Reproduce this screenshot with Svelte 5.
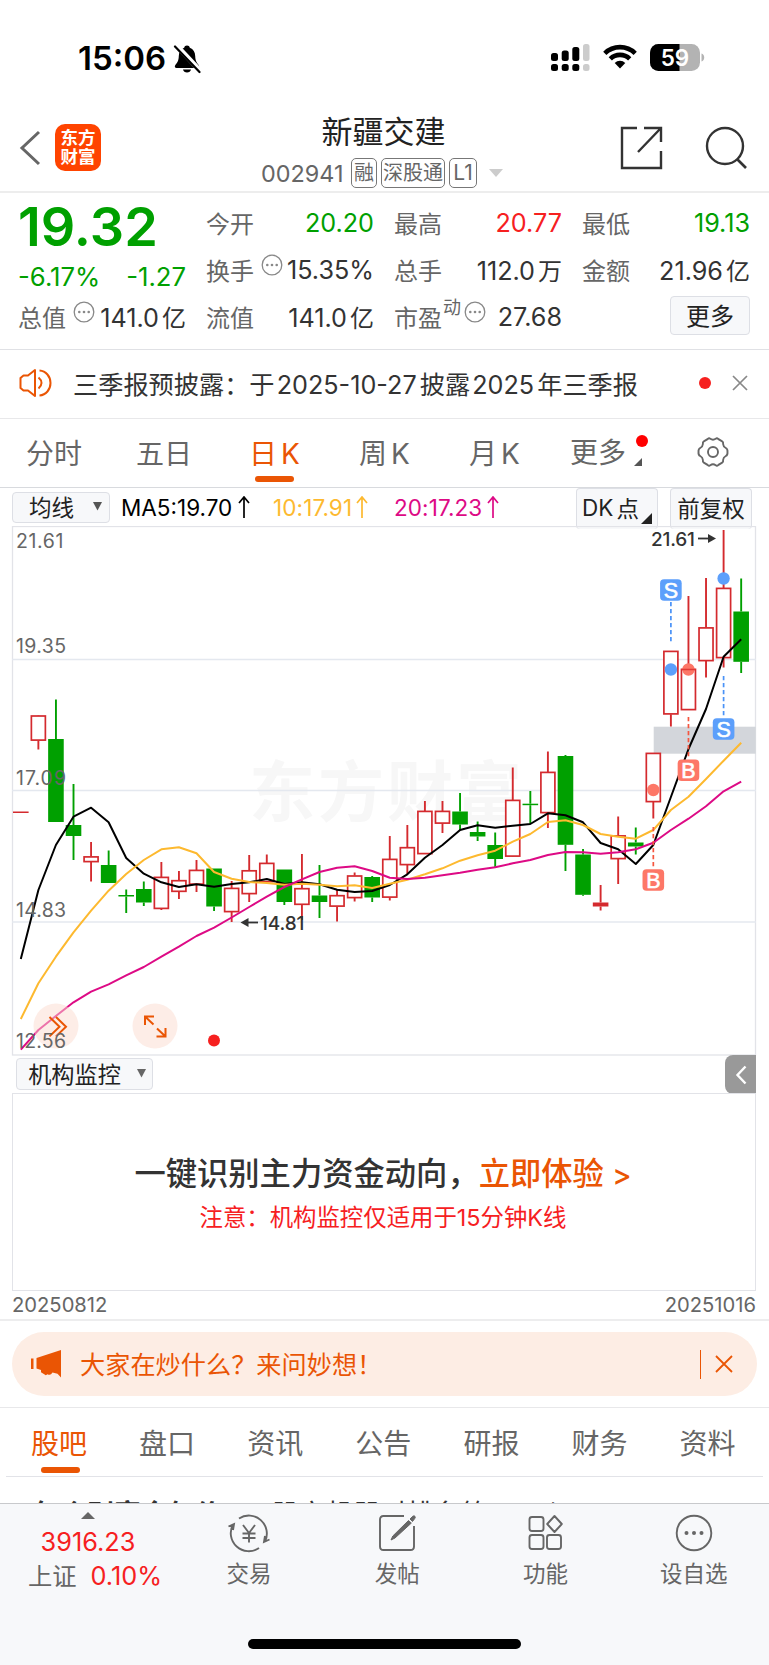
<script>
  const X0 = 20.8;
  const STEP = 17.57;
  const cx = (i) => X0 + STEP * i;

  // [kind, bodyTop, bodyBottom, high, low]; r = rising, g = falling, f = solid red
  const candles = [
    ['f', 811.5, 813, 811.5, 813],
    ['r', 715.6, 740.5, 716, 749.5],
    ['g', 739, 822, 699.5, 822],
    ['g', 825, 836, 784, 860],
    ['r', 856.5, 862, 842, 881.5],
    ['g', 865, 883, 850.5, 883],
    ['g', 895, 896.5, 889.5, 913],
    ['g', 889, 902.5, 881.5, 906],
    ['r', 877, 908.8, 862, 910],
    ['r', 880.3, 891.7, 871, 899],
    ['r', 870, 884.5, 860, 892],
    ['g', 868.5, 906.5, 868.5, 911],
    ['r', 888, 912, 881, 922],
    ['r', 870.4, 894, 855, 902],
    ['r', 863, 882, 854.5, 882],
    ['g', 869.5, 902, 869.5, 905],
    ['r', 888.3, 904.7, 854, 920],
    ['g', 895.5, 902, 865, 918],
    ['r', 895.3, 906.5, 889.5, 921.5],
    ['r', 875.6, 898, 872.5, 901.5],
    ['g', 877, 897.5, 876, 902],
    ['r', 859, 897.5, 836, 900.5],
    ['r', 847.3, 865, 825, 874],
    ['r', 811, 854, 801, 854],
    ['r', 811, 823.5, 801, 833],
    ['g', 811.5, 824.5, 793, 830],
    ['g', 832, 836.5, 821.5, 841],
    ['g', 845, 859, 832.5, 867],
    ['r', 800, 856.5, 767.5, 856],
    ['g', 803.7, 805.2, 791, 824],
    ['r', 772, 813, 751.5, 828],
    ['g', 756, 844.8, 755, 871],
    ['g', 854.5, 894.8, 849, 895.8],
    ['f', 902.5, 906.5, 885, 910.5],
    ['r', 835.5, 859, 816.5, 884],
    ['g', 842.5, 846.5, 827.5, 854.5],
    ['r', 753, 802, 753, 818.5],
    ['r', 651, 714.3, 651, 726.5],
    ['r', 669, 710, 596, 710],
    ['r', 627.5, 661, 578, 677.5],
    ['r', 588, 658, 530, 667.5],
    ['g', 611.5, 661.8, 578.5, 673]
  ];

  const ma5 = [959, 890, 845, 816.7, 807.7, 822.3, 858, 873.7, 882.3, 887, 884.3, 886.7, 884, 882.3, 879, 884, 882.3, 884.3, 889.7, 892, 891, 885, 874.3, 857.7, 845, 830, 825.3, 827.7, 825.7, 824, 813.3, 815.3, 822.3, 843, 849.3, 864, 845, 797, 749, 709, 656.7, 639.3];
  const ma10 = [1019, 983.3, 956.7, 932.3, 910.7, 890.7, 874, 860, 849.3, 847.3, 853.3, 872, 878.7, 882, 883, 884.7, 883.7, 884.7, 886.3, 885.3, 888, 883.7, 879.7, 874.3, 868.3, 860.7, 855.3, 850.7, 841.7, 834, 822, 820.3, 825, 834, 836.7, 838.7, 830, 810, 796.7, 779, 760.7, 742.7];
  const ma20 = [1049.7, 1030, 1016, 1002.3, 991.7, 984.3, 975.3, 967, 956.7, 946.7, 936, 927.7, 917.5, 907, 896.7, 887, 879.3, 872, 867.7, 866.3, 871, 877.7, 879, 877.7, 875.3, 872.7, 869.7, 867.3, 863.3, 860, 855, 852, 852.3, 853.7, 852.3, 849.3, 842.7, 830, 818.7, 806.3, 791.3, 781.7];
  const line = (ys) => ys.map((y, i) => `${cx(i).toFixed(1)},${y}`).join(' ');

  const grid = [659.5, 790.5, 922];
  const scale = [['21.61', 548], ['19.35', 653], ['17.09', 784.5], ['14.83', 916.5], ['12.56', 1048]];

  const marks = [
    { t: 'S', i: 37, y: 590, d: [602, 643], dot: 669.5 },
    { t: 'S', i: 40, y: 729, d: [676, 717], dot: 578.5 },
    { t: 'B', i: 38, y: 770.3, d: [717, 759], dot: 669.5 },
    { t: 'B', i: 36, y: 880, d: [827, 869], dot: 790 }
  ];

  const tabs = ['股吧', '盘口', '资讯', '公告', '研报', '财务', '资料'];
</script>

{#snippet more()}
  <svg class="more" width="22" height="22" viewBox="0 0 22 22"><circle cx="11" cy="11" r="9.8" fill="none" stroke="#888" stroke-width="1.3" /><circle cx="6.3" cy="11" r="1.3" fill="#888" /><circle cx="11" cy="11" r="1.3" fill="#888" /><circle cx="15.7" cy="11" r="1.3" fill="#888" /></svg>
{/snippet}

<main>
  <div class="status">
    <b class="clock">15:06</b>
    <svg class="bell" width="28" height="30" viewBox="0 0 28 30">
      <path d="M14 1.5c1.5 0 2.5.8 2.8 2.2 3.6 1.2 5.3 4.400 5.400 8.300.1 5.500 2.300 7.500 3.600 9.300.8 1.200.3 2.700-1.300 2.700H3.500c-1.600 0-2.100-1.500-1.300-2.700 1.300-1.800 3.500-3.800 3.600-9.300.1-3.900 1.800-7.100 5.400-8.300C11.500 2.300 12.500 1.500 14 1.500z" />
      <path d="M10 25.500h8c-.4 1.900-2 3-4 3s-3.600-1.100-4-3z" />
      <path d="M3.500 1.500 27.500 27" stroke="#fff" stroke-width="5" />
      <path d="M2 2.500 26.500 28" stroke="#000" stroke-width="2.200" stroke-linecap="round" />
    </svg>
    <svg class="signal" width="39" height="28" viewBox="0 0 39 28">
      <g><rect x="0" y="9" width="7" height="8" rx="2.500" /><rect x="10.700" y="6.500" width="7" height="10.500" rx="2.500" /><rect x="21.300" y="3" width="7" height="14" rx="2.500" /><rect x="0" y="20" width="7" height="7" rx="2.500" /><rect x="10.700" y="20" width="7" height="7" rx="2.500" /><rect x="21.300" y="20" width="7" height="7" rx="2.500" /></g>
      <g fill="#ccc"><rect x="32" y="0" width="6.500" height="17" rx="2.500" /><rect x="32" y="20" width="6.500" height="7" rx="2.500" /></g>
    </svg>
    <svg class="wifi" width="34" height="25" viewBox="0 0 34 25">
      <g fill="none" stroke="#000" stroke-width="4.600"><path d="M1.800 9.300a21.800 21.800 0 0 1 30.400 0" /><path d="M7.300 14.900a13.800 13.800 0 0 1 19.400 0" /></g>
      <path d="M17 24.500l-5.300-5.600a7.600 7.600 0 0 1 10.600 0z" />
    </svg>
    <svg class="battery" width="55" height="28" viewBox="0 0 55 28">
      <defs><clipPath id="cell"><rect width="50" height="27" rx="8.500" /></clipPath></defs>
      <g clip-path="url(#cell)"><rect width="50" height="27" fill="#b3b3b3" /><rect width="29.500" height="27" /></g>
      <path d="M51.500 9.500c1.700.4 2.700 2 2.700 4s-1 3.600-2.700 4z" fill="#b3b3b3" />
      <text x="25" y="21.600" text-anchor="middle" font-size="22.500" font-weight="600" fill="#fff">59</text>
    </svg>
  </div>

  <header>
    <svg class="back" width="22" height="36" viewBox="0 0 22 36"><path d="M20 2 3 18l17 16" fill="none" stroke="#666" stroke-width="3" /></svg>
    <div class="logo"><span>东方</span><span>财富</span></div>
    <div class="title">
      <h1>新疆交建</h1>
      <div class="code"><span class="num">002941</span><i>融</i><i class="wide">深股通</i><i class="lv">L1</i><svg width="14" height="8" viewBox="0 0 14 8"><path d="M0 0h14L7 8z" fill="#ccc" /></svg></div>
    </div>
    <svg class="share" width="44" height="44" viewBox="0 0 44 44"><path d="M17 2H2v40h39V25M24 2h17v14M41 2 18 26" fill="none" stroke="#333" stroke-width="2.400" /></svg>
    <svg class="search" width="44" height="44" viewBox="0 0 44 44"><circle cx="20" cy="20" r="18" fill="none" stroke="#333" stroke-width="2.400" /><path d="m32 33 9 9" stroke="#333" stroke-width="2.600" /></svg>
  </header>

  <section class="quote">
    <div class="col first">
      <strong>19.32</strong>
      <div class="row change green"><span>-6.17%</span><span>-1.27</span></div>
      <div class="row cap"><label>总值</label>{@render more()}<em>141.0<u>亿</u></em></div>
    </div>
    <div class="col">
      <div class="row"><label>今开</label><em class="green">20.20</em></div>
      <div class="row"><label>换手</label>{@render more()}<em>15.35%</em></div>
      <div class="row"><label>流值</label><em>141.0<u>亿</u></em></div>
    </div>
    <div class="col">
      <div class="row"><label>最高</label><em class="red">20.77</em></div>
      <div class="row"><label>总手</label><em>112.0<u>万</u></em></div>
      <div class="row pe"><label>市盈</label><sup>动</sup>{@render more()}<em>27.68</em></div>
    </div>
    <div class="col">
      <div class="row"><label>最低</label><em class="green">19.13</em></div>
      <div class="row"><label>金额</label><em>21.96<u>亿</u></em></div>
      <div class="row end"><button>更多</button></div>
    </div>
  </section>

  <section class="notice">
    <svg width="34" height="30" viewBox="0 0 34 30"><g fill="none" stroke="#ea5504" stroke-width="2"><path d="M16 2v26l-7-5.500H4.500L1.500 20V10l3-2.500H9z" stroke-linejoin="round" /><path d="M19.500 9.500q3 2.500 3 5.500t-3 5.500M20.500 2.500C27 3 31.500 8.500 31.500 15S27 27 20.500 27.500" /></g></svg>
    <p>三季报预披露：于<u>2025-10-27</u>披露<u>2025</u>年三季报</p>
    <span class="dot"></span>
    <svg class="close" width="16" height="16" viewBox="0 0 16 16"><path d="m1 1 14 14M15 1 1 15" stroke="#888" stroke-width="1.700" /></svg>
  </section>

  <nav class="periods">
    <span>分时</span><span>五日</span><span class="on">日<u>K</u></span><span>周<u>K</u></span><span>月<u>K</u></span>
    <span class="drop">更多<svg width="9" height="28" viewBox="0 0 9 28"><path d="M8 19v8H0z" fill="#555" /></svg></span>
    <svg class="gear" width="32" height="32" viewBox="0 0 32 32"><g fill="none" stroke="#666" stroke-width="1.900"><path d="M10.500 3.200Q12 1.500 13.300 2.800Q16 4.600 18.700 2.800Q20 1.500 21.500 3.200L25.200 5.300Q26.500 6 26.100 8Q26.300 10.800 28.800 12Q30.800 13 30.500 16Q30.800 19 28.800 20Q26.300 21.200 26.100 24Q26.500 26 25.200 26.700L21.500 28.800Q20 30.500 18.700 29.200Q16 27.400 13.300 29.200Q12 30.500 10.500 28.800L6.800 26.700Q5.500 26 5.900 24Q5.700 21.200 3.200 20Q1.200 19 1.500 16Q1.200 13 3.200 12Q5.700 10.800 5.900 8Q5.500 6 6.800 5.300Z" /><circle cx="16" cy="16" r="5" /></g></svg>
  </nav>

  <div class="tools">
    <button class="ma">均线<svg width="9" height="9" viewBox="0 0 9 9"><path d="M0 0h9L4.500 8.500z" fill="#666" /></svg></button>
    <span class="m5">MA5:19.70<svg width="12" height="22" viewBox="0 0 12 22"><path d="M6 22V1M1 7 6 1l5 6" /></svg></span>
    <span class="m10">10:17.91<svg width="12" height="22" viewBox="0 0 12 22"><path d="M6 22V1M1 7 6 1l5 6" /></svg></span>
    <span class="m20">20:17.23<svg width="12" height="22" viewBox="0 0 12 22"><path d="M6 22V1M1 7 6 1l5 6" /></svg></span>
    <button class="dk">DK<u>点</u><svg width="11" height="11" viewBox="0 0 11 11"><path d="M11 0v11H0z" fill="#222" /></svg></button>
    <button class="fq">前复权</button>
  </div>

  <svg class="chart" width="769" height="530" viewBox="0 526 769 530">
    <text x="249" y="815.500" font-size="66" font-weight="700" fill="#f7f7f7" textLength="273">东方财富</text>
    <rect x="12.500" y="526.500" width="743" height="528.500" fill="none" stroke="#e2e3e8" stroke-width="1.300" />
    {#each grid as y}<line x1="12" x2="756" y1={y} y2={y} stroke="#e4e8ef" stroke-width="1.400" />{/each}
    <rect x="653.700" y="726.700" width="102" height="27" fill="#d3d6db" />
    {#each candles as [k, a, b, h, l], i}
      {@const c = k === 'g' ? '#00a000' : '#d42a2e'}
      <line x1={cx(i)} x2={cx(i)} y1={h} y2={a} stroke={c} stroke-width="1.900" />
      <line x1={cx(i)} x2={cx(i)} y1={b} y2={l} stroke={c} stroke-width="1.900" />
      {#if k === 'r'}
        <rect x={cx(i) - 7} y={a + 0.400} width="14" height={b - a - 0.800} fill="#fff" stroke={c} stroke-width="1.700" />
      {:else}
        <rect x={cx(i) - 7.800} y={a} width="15.600" height={b - a} fill={c} />
      {/if}
    {/each}
    {#each marks as m}<circle cx={cx(m.i)} cy={m.dot} r="6.200" fill={m.t === 'S' ? '#5c9ffb' : '#fd7767'} />{/each}
    <line x1={cx(38) - 7} x2={cx(38) + 7} y1="669.500" y2="669.500" stroke="#e23b36" stroke-width="1.500" />
    <g fill="none" stroke-width="2" stroke-linejoin="round">
      <polyline points={line(ma5)} stroke="#000" />
      <polyline points={line(ma10)} stroke="#fdb92f" />
      <polyline points={line(ma20)} stroke="#dd0a85" />
    </g>
    {#each marks as m}
      {@const c = m.t === 'S' ? '#5c9ffb' : '#fd7767'}
      <line x1={cx(m.i)} x2={cx(m.i)} y1={m.d[0]} y2={m.d[1]} stroke={m.t === 'S' ? '#4a92f7' : '#f5563f'} stroke-width="1.700" stroke-dasharray="4.200 2.800" />
      <rect x={cx(m.i) - 10.800} y={m.y - 10.800} width="21.600" height="21.600" rx="4" fill={c} />
      <text x={cx(m.i)} y={m.y + 7.500} text-anchor="middle" font-family="Liberation Sans" font-size="21.500" fill="#fff" stroke="#fff" stroke-width=".6">{m.t}</text>
    {/each}
    <g fill="#333" stroke="#333" stroke-width="0">
      <text x="651" y="546" font-size="19" font-weight="500" textLength="44">21.61</text>
      <path d="M698 538.500h14" stroke-width="1.800" /><path d="m708 534 8 4.500-8 4.500z" />
      <text x="260" y="929.500" font-size="19" font-weight="500" textLength="44.500">14.81</text>
      <path d="M258 922.500h-14" stroke-width="1.800" /><path d="m248.500 918-8 4.500 8 4.500z" />
    </g>
    <circle cx="56" cy="1026" r="22.500" fill="#fcdccf" opacity=".5" />
    <circle cx="155" cy="1026" r="22.500" fill="#fcdccf" opacity=".5" />
    <g fill="none" stroke="#ea5504" stroke-width="2">
      <path d="m49.500 1017 10 9.700-10 9.700M56 1017l10 9.700-10 9.700" />
      <path d="M145 1025v-8.500h9M145 1016.500l8.500 8M156.500 1036.500h9V1028M165.500 1036.500l-8.500-8" />
    </g>
    <circle cx="214" cy="1040.500" r="6" fill="#f6201f" />
    {#each scale as [t, y]}<text x="16" {y} font-size="19.500" fill="#666" textLength={t[0] === '2' ? 47.500 : 50}>{t}</text>{/each}
  </svg>

  <div class="monitor">
    <button>机构监控<svg width="9" height="9" viewBox="0 0 9 9"><path d="M0 0h9L4.500 8.500z" fill="#666" /></svg></button>
    <span class="fold"><svg width="12" height="20" viewBox="0 0 12 20"><path d="M10.500 1.500 2.500 10l8 8.500" fill="none" stroke="#fff" stroke-width="2.400" /></svg></span>
  </div>
  <div class="promo">
    <p class="big">一键识别主力资金动向，<span>立即体验 <b>&gt;</b></span></p>
    <p class="note">注意：机构监控仅适用于15分钟K线</p>
  </div>
  <div class="dates"><span>20250812</span><span>20251016</span></div>

  <div class="askwrap">
    <div class="ask">
      <svg width="31" height="28" viewBox="0 0 31 28"><g fill="#ea5504"><path d="M0 8.500h2.500v10.500H0zM5.500 8 30 0v27.500l-3.500-3.700-5-1.300q-2 3.500-5 1.700l-1.700 1L10 22.200V20l-4.500-1.500z" /></g></svg>
      <p>大家在炒什么？来问妙想！</p>
      <span class="bar"></span>
      <svg width="18" height="18" viewBox="0 0 18 18"><path d="m1 1 16 16M17 1 1 17" stroke="#ea5504" stroke-width="1.800" /></svg>
    </div>
  </div>

  <nav class="tabs">{#each tabs as t, i}<span class:on={i === 0}>{t}</span>{/each}</nav>
  <div class="peek"><b>每个别富今气价</b><span>股市机器时排名第</span><span class="up">个</span><em>说说</em></div>

  <footer>
    <div class="index">
      <svg width="14" height="7" viewBox="0 0 14 7"><path d="M7 0l7 7H0z" fill="#666" /></svg>
      <span class="red">3916.23</span>
      <div>上证<span class="red">0.10%</span></div>
    </div>
    <div class="act">
      <svg width="44" height="40" viewBox="0 0 44 40"><g fill="none" stroke="#666" stroke-width="1.900"><path d="M12 5.500A18 18 0 0 1 38 28.500M38 28.500l-1-1.500M42.500 26.500l-5.500 2.500 1-6M32 35A18 18 0 0 1 6 11.500M1.500 13.500l5.500-2.500-1 6" /><path d="m16 12 6 8 6-8M22 20v9.500M15.500 20.500h13M15.500 25h13" /></g></svg>交易
    </div>
    <div class="act">
      <svg width="44" height="40" viewBox="0 0 44 40"><g fill="none" stroke="#666" stroke-width="1.900"><path d="M29 3H8.500Q5 3 5 6.500v27Q5 37 8.500 37h27q3.500 0 3.500-3.500V13" /></g><path d="m33.500 7.500 2.800 2.600L20 25l-4 2 1.800-4zM35 6l2.800-2.800q1.500-.8 2.200.2t-.3 2.200L37.500 8.500z" fill="#666" stroke="#666" stroke-width="1" /></svg>发帖
    </div>
    <div class="act">
      <svg width="44" height="40" viewBox="0 0 44 40"><g fill="none" stroke="#666" stroke-width="1.900"><rect x="6.500" y="4" width="14" height="14" rx="2.500" /><rect x="6.500" y="22" width="14" height="14" rx="2.500" /><rect x="24" y="22" width="14" height="14" rx="2.500" /><path d="m31.500 3 7.300 8-7.300 8-7.300-8z" stroke-linejoin="round" /></g></svg>功能
    </div>
    <div class="act">
      <svg width="44" height="40" viewBox="0 0 44 40"><circle cx="22" cy="20" r="17.300" fill="none" stroke="#666" stroke-width="1.900" /><g fill="#666"><circle cx="14.500" cy="20" r="2" /><circle cx="22" cy="20" r="2" /><circle cx="29.500" cy="20" r="2" /></g></svg>设自选
    </div>
    <div class="home"></div>
  </footer>
</main>

<style>
  :global(body) { margin: 0; background: #fff; }
  main { width: 769px; height: 1665px; overflow: hidden; display: flex; flex-direction: column; font-family: Inter, 'Noto Sans CJK SC', sans-serif; color: #333; white-space: nowrap; }
  main :global(*) { box-sizing: border-box; }
  svg { display: block; flex: none; }
  u { text-decoration: none; }
  p, h1 { margin: 0; font-weight: 400; }
  i, em { font-style: normal; }
  .green { color: #00a000; }
  .red { color: #f6201f; }
  button { font: inherit; color: #222; background: #f7f8fa; border: 1.5px solid #dddfe5; border-radius: 4px; padding: 0; display: flex; align-items: center; justify-content: center; }

  .status { height: 105px; flex: none; display: flex; align-items: flex-start; padding: 44px 0 0 78px; color: #000; }
  .clock { font-size: 33px; line-height: 28px; font-weight: 600; width: 95px; letter-spacing: 0; }
  .signal { margin-left: 350px; }
  .wifi { margin-left: 13px; }
  .battery { margin-left: 13px; }

  header { height: 88px; flex: none; border-bottom: 2px solid #ededed; display: grid; grid-template-columns: 55px 46px 521px 42px 44px; align-items: start; }
  .back { margin: 25px 0 0 19px; }
  .logo { margin-top: 19px; height: 47px; border-radius: 10px; background: #ff4400; color: #fff; font-size: 17.500px; font-weight: 700; line-height: 19px; display: flex; flex-direction: column; align-items: center; padding-top: 4px; }
  .title { padding: 10px 0 0 21px; text-align: center; }
  h1 { font-size: 31px; line-height: 34px; width: 523px; color: #222; }
  .code { display: flex; align-items: center; height: 30px; margin: 9px 0 0 139px; color: #666; font-size: 23.400px; }
  .num { width: 90px; text-align: left; }
  .code i { border: 1.3px solid #777; border-radius: 5px; height: 30px; line-height: 28px; width: 26px; font-size: 20px; margin-right: 4px; display: flex; justify-content: center; }
  .code i.wide { width: 64px; }
  .code i.lv { width: 28px; font-size: 21px; margin-right: 12px; }
  .share { margin: 21px 0 0 -2px; }
  .search { margin: 21px 0 0 41px; }

  .quote { height: 157px; flex: none; border-bottom: 1.5px solid #e0e1e5; display: grid; grid-template-columns: repeat(4, 168px); gap: 20px; padding: 6px 0 0 18px; font-size: 24px; }
  .row { height: 47px; display: flex; align-items: center; }
  .row label { color: #666; width: 48px; }
  .row em { margin-left: auto; font-size: 25.200px; }
  .row u { margin-left: 3px; font-size: 24px; }
  .row .more { margin: -9px 0 0 7px; }
  .first strong { display: block; font-size: 54px; line-height: 54px; margin-top: 1px; font-weight: 600; color: #00a000; }
  .first .change { height: 45px; justify-content: space-between; font-size: 25.700px; }
  .first .cap { height: 35px; }
  .pe sup { font-size: 18px; line-height: 18px; color: #666; margin: -17px 0 0 1px; }
  .pe .more { margin-left: 3px; }
  .end { justify-content: flex-end; }
  .end button { width: 80px; height: 39px; margin-top: -2px; padding-bottom: 3px; }

  .notice { height: 69px; flex: none; border-bottom: 1.5px solid #e8e8ea; display: flex; align-items: center; padding: 0 20px 2px 19px; }
  .notice p { margin-left: 20px; width: 626px; font-size: 25.2px; padding-bottom: 1px; }
  .notice u { margin: 0 3px 0 2.200px; }
  .dot { width: 12px; height: 12px; border-radius: 50%; background: #f6201f; }
  .close { margin-left: 21px; }

  .periods { height: 69px; flex: none; border-bottom: 1.5px solid #d8dade; display: flex; padding-left: 26px; font-size: 28px; line-height: 70px; color: #666; }
  .periods span { flex: none; width: 110px; position: relative; }
  .periods span:nth-child(2) { width: 113px; }
  .periods span:nth-child(5) { width: 101px; }
  .periods u { margin-left: 4px; }
  .periods .on, .tabs .on { color: #ea5504; }
  .periods .on::after { content: ''; position: absolute; left: 6px; bottom: 5px; width: 39px; height: 6px; border-radius: 3px; background: #ea5504; }
  .periods .drop { width: 127px; display: flex; align-items: center; gap: 8px; }
  .drop::after { content: ''; position: absolute; left: 66px; top: 16px; width: 12px; height: 12px; border-radius: 50%; background: #f00; }
  .gear { margin-top: 17px; }

  .tools { height: 38px; flex: none; display: flex; align-items: flex-start; padding-left: 12px; font-size: 22.500px; color: #000; }
  .tools button { height: 41px; padding-bottom: 4px; }
  .tools .ma { width: 98px; height: 31px; margin-top: 4px; gap: 19px; padding: 0 0 3px 9px; }
  .tools > span { display: flex; align-items: center; height: 38px; }
  .tools svg path { fill: none; stroke: currentColor; stroke-width: 1.7; }
  .tools button svg path { fill: #555; stroke: none; }
  .m5 { width: 152px; padding-left: 11px; gap: 6px; }
  .m10 { width: 121px; padding-left: 11px; gap: 4px; color: #fdb92f; letter-spacing: .1px; }
  .m20 { width: 193px; padding-left: 11px; gap: 5px; color: #dd0a85; letter-spacing: .1px; }
  .tools .dk { width: 82px; margin-right: 12px; border-bottom: 0; }
  .dk u { margin-left: 3px; }
  .dk svg { margin: 22px 0 0 2px; }
  .tools .dk svg path { fill: #222; }
  .tools .fq { width: 82px; border-bottom: 0; }

  .monitor { height: 37px; flex: none; display: flex; justify-content: space-between; padding: 0 13px 0 16px; }
  .monitor button { width: 137px; height: 32px; margin-top: 2px; font-size: 23.2px; gap: 16px; padding: 0 0 2px 5px; }
  .fold { width: 31px; height: 39px; margin-top: -1px; background: #999; border-radius: 8px 0 0 8px; display: grid; place-items: center; }
  .promo { height: 198px; flex: none; margin: 0 13px 0 12px; border: 1.500px solid #e2e3e8; padding: 59px 2px 0 0; text-align: center; }
  .big { font-size: 31.300px; line-height: 42px; font-weight: 500; }
  .big span { color: #ea5504; }
  .big b { font-weight: 500; font-size: 29px; }
  .note { font-size: 23.400px; line-height: 43px; color: #f6201f; }
  .dates { height: 30px; flex: none; border-bottom: 2px solid #ededee; display: flex; justify-content: space-between; padding: 0 13px 0 12px; font-size: 20.200px; line-height: 28px; color: #666; }

  .askwrap { height: 87px; flex: none; border-bottom: 1.500px solid #e8e8ea; padding: 11px 12px 0; }
  .ask { height: 64px; border-radius: 32px; background: #fdede4; color: #ea5504; display: flex; align-items: center; padding: 0 24px 0 19px; font-size: 25.200px; }
  .ask p { margin-left: 18px; flex: 1; padding-bottom: 3px; }
  .bar { width: 1.500px; height: 29px; background: #ea5504; margin-right: 14px; }

  .tabs { height: 69px; flex: none; margin: 0 6px; border-bottom: 1.500px solid #e2e3e8; display: flex; padding-left: 25px; font-size: 28px; line-height: 72px; color: #666; }
  .tabs span { width: 108.100px; flex: none; position: relative; }
  .tabs .on::after { content: ''; position: absolute; left: 10px; bottom: 3px; width: 39px; height: 6px; border-radius: 3px; background: #ea5504; }

  .peek { height: 26px; flex: none; overflow: hidden; display: flex; padding: 24px 0 0 33px; font-size: 27px; line-height: 27px; color: #333; }
  .peek b { width: 239px; }
  .peek .up { margin-left: 52px; font-size: 25px; }
  .peek em { margin-left: 95px; font-size: 22px; color: #ea5504; }

  footer { flex: 1; position: relative; background: #f7f8fa; border-top: 1.500px solid #c8c9cc; display: grid; grid-template-columns: 175px repeat(4, 148.200px); align-content: start; font-size: 22.500px; color: #666; }
  .index { display: flex; flex-direction: column; align-items: center; padding-top: 8px; font-size: 24.300px; }
  .index .red { font-size: 25.300px; }
  .index > .red { line-height: 30px; margin: 8px 0 0 1px; }
  .index > div { line-height: 30px; margin: 4px 0 0 15px; }
  .index div .red { margin-left: 14px; }
  .act { display: flex; flex-direction: column; align-items: center; padding-top: 9px; line-height: 30px; gap: 6px; }
  .home { position: absolute; left: 248px; bottom: 16px; width: 273px; height: 10px; border-radius: 5px; background: #000; }
</style>
